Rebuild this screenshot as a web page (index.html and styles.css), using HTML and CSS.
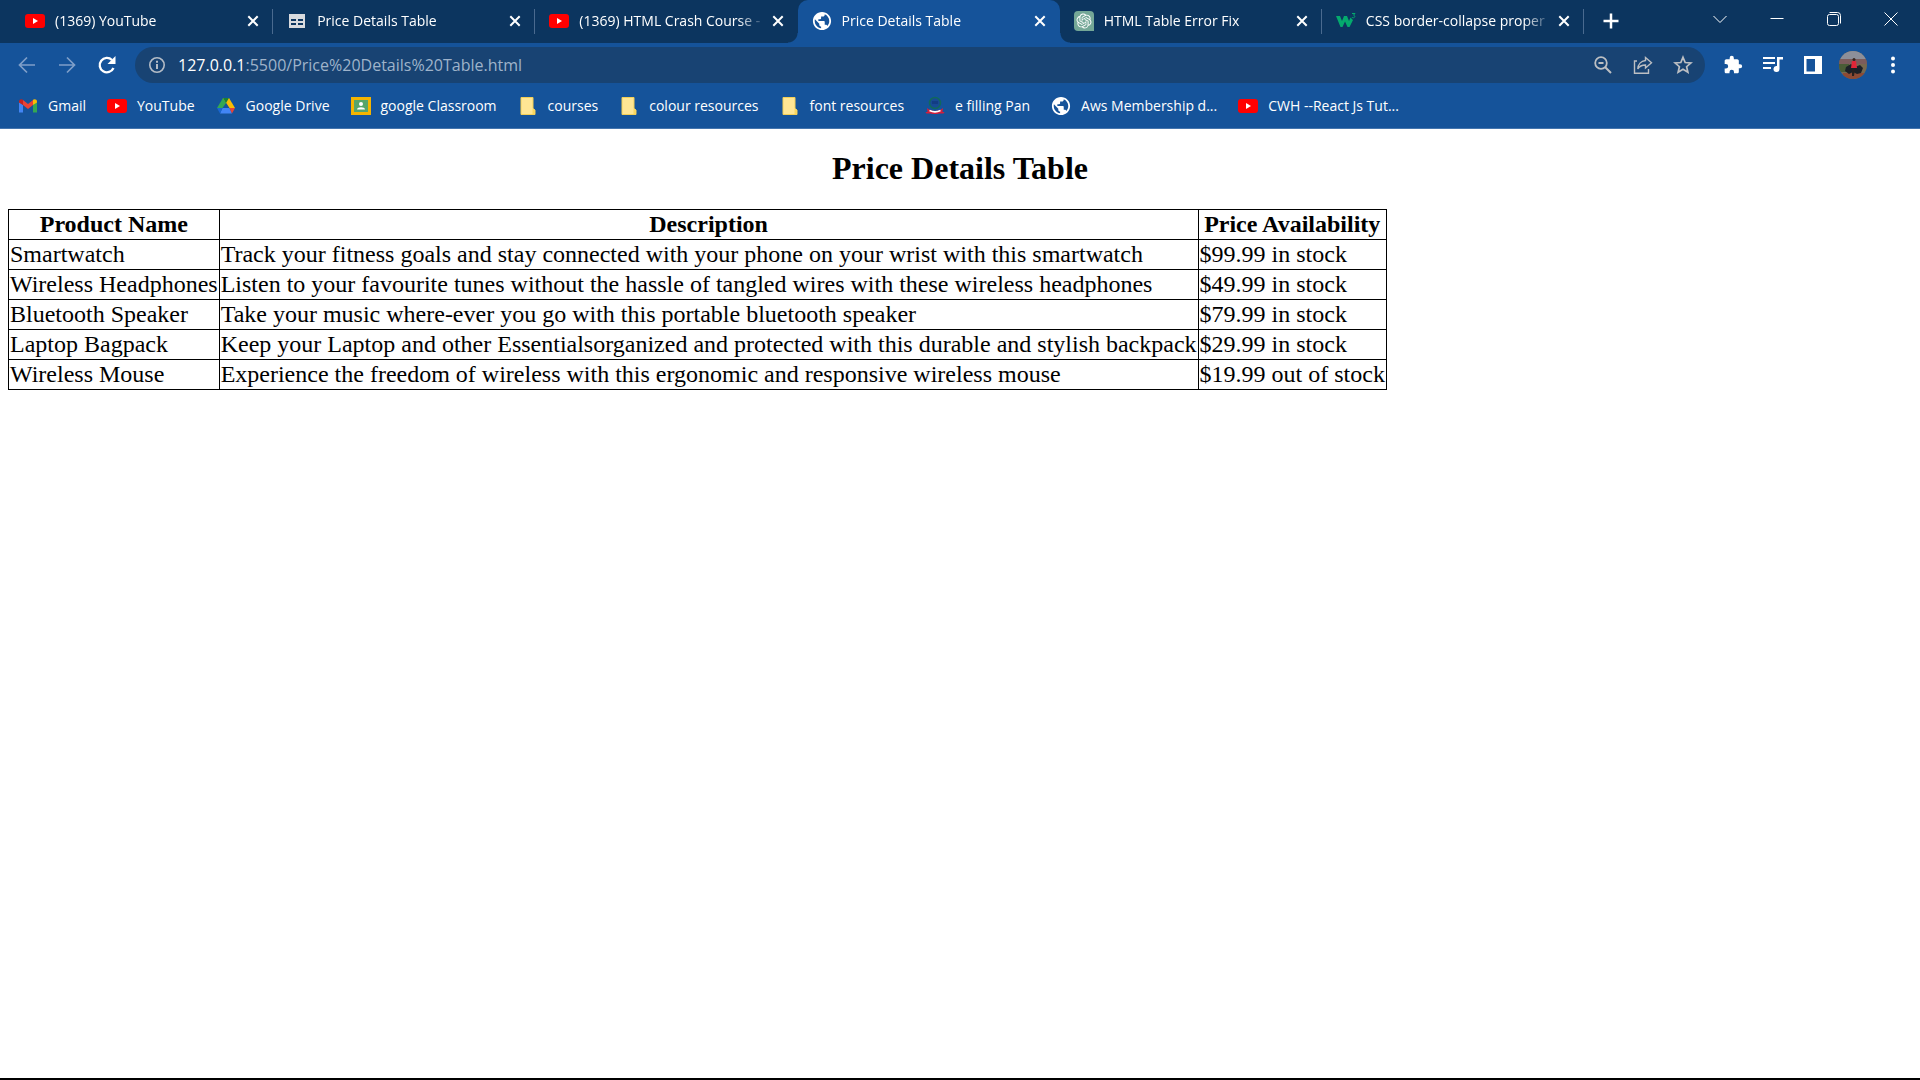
FILE: index.html
```html
<!DOCTYPE html>
<html lang="en">
<head>
<meta charset="utf-8">
<title>Price Details Table</title>
<link rel="stylesheet" href="styles.css">
</head>
<body>
<svg class="sprite" aria-hidden="true">
  <symbol id="i-youtube" viewBox="0 0 20 20"><rect y="3" width="20" height="14" rx="3" fill="#f00"/><path d="M8 7l5 3-5 3z" fill="#fff"/></symbol>
  <symbol id="i-table" viewBox="0 0 20 20"><path d="M2 3h16v14H2z" fill="#d8dade"/><path d="M4 8h5v2H4zM11 8h5v2h-5zM4 12h5v2H4zM11 12h5v2h-5z" fill="#0c355f"/></symbol>
  <symbol id="i-globe" viewBox="1 1 22 22"><path fill="#fff" d="M12 2C6.480 2 2 6.480 2 12s4.480 10 10 10 10-4.480 10-10S17.520 2 12 2zm-1 17.930c-3.950-.49-7-3.850-7-7.930 0-.62.08-1.210.21-1.790L9 15v1c0 1.100.9 2 2 2v1.930zm6.900-2.540c-.26-.81-1-1.390-1.900-1.390h-1v-3c0-.55-.45-1-1-1H8v-2h2c.55 0 1-.45 1-1V7h2c1.100 0 2-.9 2-2v-.41c2.930 1.190 5 4.060 5 7.410 0 2.080-.8 3.970-2.100 5.390z"/></symbol>
  <symbol id="i-gpt" viewBox="0 0 20 20"><path d="M4 0h12a4 4 0 0 1 4 4v16H4a4 4 0 0 1-4-4V4a4 4 0 0 1 4-4z" fill="#74a797"/><path transform="translate(2.500 2.500) scale(.625)" fill="#fff" d="M22.282 9.821a5.985 5.985 0 0 0-.516-4.910 6.046 6.046 0 0 0-6.510-2.900A6.065 6.065 0 0 0 4.981 4.180a5.985 5.985 0 0 0-3.998 2.900 6.046 6.046 0 0 0 .743 7.097 5.980 5.980 0 0 0 .51 4.911 6.051 6.051 0 0 0 6.515 2.900A5.985 5.985 0 0 0 13.260 24a6.056 6.056 0 0 0 5.772-4.206 5.990 5.990 0 0 0 3.997-2.900 6.056 6.056 0 0 0-.747-7.073zM13.260 22.430a4.476 4.476 0 0 1-2.876-1.040l.141-.081 4.779-2.758a.795.795 0 0 0 .392-.681v-6.737l2.020 1.168a.071.071 0 0 1 .038.052v5.583a4.504 4.504 0 0 1-4.494 4.494zM3.600 18.304a4.470 4.470 0 0 1-.535-3.014l.142.085 4.783 2.759a.771.771 0 0 0 .780 0l5.843-3.369v2.332a.080.080 0 0 1-.033.062L9.740 19.950a4.500 4.500 0 0 1-6.140-1.646zM2.340 7.896a4.485 4.485 0 0 1 2.366-1.973V11.600a.766.766 0 0 0 .388.676l5.815 3.355-2.020 1.168a.076.076 0 0 1-.071 0l-4.830-2.786A4.504 4.504 0 0 1 2.340 7.872zm16.597 3.855l-5.833-3.387L15.119 7.200a.076.076 0 0 1 .071 0l4.830 2.791a4.494 4.494 0 0 1-.676 8.105v-5.678a.79.79 0 0 0-.407-.667zm2.010-3.023l-.141-.085-4.774-2.782a.776.776 0 0 0-.785 0L9.409 9.230V6.897a.066.066 0 0 1 .028-.061l4.830-2.787a4.500 4.500 0 0 1 6.680 4.660zm-12.640 4.135l-2.020-1.164a.080.080 0 0 1-.038-.057V6.075a4.500 4.500 0 0 1 7.375-3.453l-.142.080L8.704 5.460a.795.795 0 0 0-.393.681zm1.097-2.365l2.602-1.500 2.607 1.500v2.999l-2.597 1.500-2.607-1.500z"/></symbol>
  <symbol id="i-w3" viewBox="0 0 20 20"><path d="M0 5h4l2 5 2-5h3l2 5 1.500-3.500L17 9l-3.500 7h-2L9 10.500 6.500 16h-2z" fill="#04aa6d"/><path d="M16 2.500h3l-1.500 1.700c2 .3 1.500 2.600-.2 2.600-.8 0-1.300-.4-1.500-.8" fill="none" stroke="#04aa6d"/></symbol>
  <symbol id="i-gmail" viewBox="0 0 20 20"><path d="M1 6v10.500h4V9z" fill="#4285f4"/><path d="M15 9v7.500h4V6z" fill="#34a853"/><path d="M1 5.500C1 3.300 3.500 2.500 5 3.800V9L1 6.500z" fill="#c5221f"/><path d="M5 4l5 4 5-4v5l-5 4-5-4z" fill="#ea4335"/><path d="M15 3.800c1.500-1.300 4-.5 4 1.700v1L15 9z" fill="#fbbc04"/></symbol>
  <symbol id="i-drive" viewBox="0 0 20 20"><path d="M7 2h3v5l-3.500 5H1z" fill="#34a853"/><path d="M7 2h6l6 10h-5.500z" fill="#fbbc04"/><path d="M7 2h6l-3 5z" fill="#188038"/><path d="M6.500 12h7l2.500 5.500H4z" fill="#4285f4"/><path d="M13.500 12H19l-3 5.500z" fill="#ea4335"/><path d="M1 12h5.500L4 17.500z" fill="#1967d2"/></symbol>
  <symbol id="i-classroom" viewBox="0 0 20 20"><path d="M0 1h20v18H0z" fill="#f4b400"/><path d="M3 4h14v12H3z" fill="#57a56a"/><circle cx="10" cy="8" r="2" fill="#fff"/><path d="M6 13.500c0-3 8-3 8 0z" fill="#fff"/></symbol>
  <symbol id="i-folder" viewBox="0 0 20 20"><path d="M3 1.500h12v11l2 1.500v4.500H3z" fill="#ffe694" stroke="#f3cf57"/><path d="M14.500 18v-5l2.500 1v4z" fill="#f9d65f"/></symbol>
  <symbol id="i-pan" viewBox="0 0 20 20"><circle cx="10" cy="7" r="5.500" fill="#174a94" stroke="#11695c" stroke-width="1.500"/><path d="M7 5h6v3H7z" fill="#123d83"/><path d="M2 12c4 4 12 4 16 0l-.5 4h2l-1 1.500h-4c-3 .8-6 .8-9 0h-4L.5 16h2z" fill="#d21f3c"/><path d="M4.500 14.500c4 2 7 2 11 0" fill="none" stroke="#fff" stroke-width="1.500"/></symbol>
  <symbol id="i-close" viewBox="0 0 20 20"><path d="M5.300 5.300l9.400 9.400M14.700 5.300l-9.400 9.400" fill="none" stroke="#fff" stroke-width="2"/></symbol>
</svg>

<header class="browser">
  <div class="tabstrip">
    <nav class="tabs" aria-label="Tabs">
      <div class="tab"><svg class="icon"><use href="#i-youtube"/></svg><a class="tab-title" href="#">(1369) YouTube</a><button class="tab-close" aria-label="Close tab"><svg class="icon"><use href="#i-close"/></svg></button></div>
      <div class="tab"><svg class="icon"><use href="#i-table"/></svg><a class="tab-title" href="#">Price Details Table</a><button class="tab-close" aria-label="Close tab"><svg class="icon"><use href="#i-close"/></svg></button></div>
      <div class="tab before-active"><svg class="icon"><use href="#i-youtube"/></svg><a class="tab-title" href="#">(1369) HTML Crash Course -</a><button class="tab-close" aria-label="Close tab"><svg class="icon"><use href="#i-close"/></svg></button></div>
      <div class="tab active"><svg class="icon"><use href="#i-globe"/></svg><a class="tab-title" href="#">Price Details Table</a><button class="tab-close" aria-label="Close tab"><svg class="icon"><use href="#i-close"/></svg></button></div>
      <div class="tab"><svg class="icon"><use href="#i-gpt"/></svg><a class="tab-title" href="#">HTML Table Error Fix</a><button class="tab-close" aria-label="Close tab"><svg class="icon"><use href="#i-close"/></svg></button></div>
      <div class="tab"><svg class="icon"><use href="#i-w3"/></svg><a class="tab-title" href="#">CSS border-collapse proper</a><button class="tab-close" aria-label="Close tab"><svg class="icon"><use href="#i-close"/></svg></button></div>
    </nav>
    <button class="new-tab" aria-label="New tab"><svg class="icon" viewBox="0 0 20 20"><path d="M10 2.500v15M2.500 10h15" stroke="#fff" stroke-width="2.500"/></svg></button>
    <div class="window-controls">
      <button aria-label="Search tabs"><svg class="icon" viewBox="0 0 20 20"><path d="M3.500 7l6.500 6.500L16.500 7"/></svg></button>
      <button aria-label="Minimize"><svg class="icon" viewBox="0 0 20 20"><path d="M3.500 9.500h13"/></svg></button>
      <button aria-label="Restore"><svg class="icon" viewBox="0 0 20 20"><rect x="3.500" y="5.500" width="11" height="11" rx="2"/><path d="M5.500 3.500h8a3 3 0 0 1 3 3v8"/></svg></button>
      <button aria-label="Close"><svg class="icon" viewBox="0 0 20 20"><path d="M3.500 3.500l13 13M16.500 3.500l-13 13"/></svg></button>
    </div>
  </div>

  <div class="toolbar">
    <button class="tool" aria-label="Back"><svg class="icon" viewBox="0 0 20 20"><path d="M18 10H3M10 2.500L2.500 10l7.500 7.500" fill="none" stroke="#7f9fc9" stroke-width="1.700"/></svg></button>
    <button class="tool" aria-label="Forward"><svg class="icon" viewBox="0 0 20 20"><path d="M2 10h15M10 2.500l7.500 7.500-7.500 7.500" fill="none" stroke="#7f9fc9" stroke-width="1.700"/></svg></button>
    <button class="tool" aria-label="Reload"><svg class="icon" viewBox="0 0 20 20"><path d="M16.500 13A7.200 7.200 0 1 1 15 5" fill="none" stroke="#fff" stroke-width="2.300"/><path d="M18.500 1v8h-8z" fill="#fff"/></svg></button>
    <div class="omnibox">
      <svg class="icon" viewBox="0 0 20 20"><circle cx="10" cy="10" r="7.200" fill="none" stroke="#b4bcc6" stroke-width="1.600"/><path d="M9 9h2v5H9zM9 5.800h2v2H9z" fill="#b4bcc6"/></svg>
      <a class="url" href="#"><span class="host">127.0.0.1</span>:5500/Price%20Details%20Table.html</a>
      <button class="tool" aria-label="Zoom"><svg class="icon" viewBox="0 0 20 20"><circle cx="8" cy="8" r="5.800" fill="none" stroke="#bcbfc3" stroke-width="1.800"/><path d="M12 12l6 6M5.500 8h5" stroke="#bcbfc3" stroke-width="2"/></svg></button>
      <button class="tool" aria-label="Share"><svg class="icon" viewBox="0 0 20 20"><path d="M4 6H1.500v12.300h14V14M12.500 2.500l6 5.300-6 5.200v-3C9 10 6.500 11 4.800 14 5 9.500 8 6 12.500 5.500z" fill="none" stroke="#bcbfc3" stroke-width="1.400"/></svg></button>
      <button class="tool" aria-label="Bookmark this tab"><svg class="icon" viewBox="0 0 20 20"><path d="M10 2.300l2.200 5.200 5.700.5-4.300 3.700 1.300 5.500-4.900-2.900-4.900 2.900 1.300-5.500L2.100 8l5.700-.5z" fill="none" stroke="#bcbfc3" stroke-width="1.700"/></svg></button>
    </div>
    <div class="actions">
      <button class="tool" aria-label="Extensions"><svg class="icon" viewBox="0 0 24 24"><path fill="#fff" d="M20.500 11H19V7c0-1.100-.9-2-2-2h-4V3.500a2.500 2.500 0 0 0-5 0V5H4c-1.100 0-2 .9-2 2v3.800h1.500a2.700 2.700 0 0 1 0 5.400H2V20c0 1.100.9 2 2 2h3.800v-1.500a2.700 2.700 0 0 1 5.400 0V22H17c1.100 0 2-.9 2-2v-4h1.500a2.500 2.500 0 0 0 0-5z"/></svg></button>
      <button class="tool" aria-label="Media"><svg class="icon" viewBox="0 0 20 20"><path d="M0 2h12v2H0zM0 7h12v2H0zM0 12h8v2H0zM14 2h6v2.500h-3.500V14a3 3 0 1 1-2.500-3z" fill="#fff"/></svg></button>
      <button class="tool" aria-label="Side panel"><svg class="icon" viewBox="0 0 20 20"><path fill="#fff" fill-rule="evenodd" d="M1 1h18v18H1zM3.500 4v12.500H12V4z"/></svg></button>
      <button class="tool" aria-label="Profile"><svg class="avatar" viewBox="0 0 28 28"><clipPath id="round"><circle cx="14" cy="14" r="14"/></clipPath><g clip-path="url(#round)"><path d="M0 0h28v28H0z" fill="#77694f"/><path d="M0 0h28v8H0z" fill="#8d8f99"/><path d="M0 8h28v5H0z" fill="#7c5c5c"/><path d="M0 13h10v8H0z" fill="#4a5c36"/><path d="M4 22h22v6H4z" fill="#8c4a34"/><path d="M7 16l5-3 4 3 5-2 3 3-2 5-4 1-4-2-4 2-4-3z" fill="#1c2026"/><path d="M13 10h4l1 7h-6z" fill="#e02638"/><circle cx="15" cy="8.500" r="1.500" fill="#38251f"/><path d="M13 18h3l-1 7h-2z" fill="#26201f"/></g></svg></button>
      <button class="tool" aria-label="Menu"><svg class="icon" viewBox="0 0 20 20"><g fill="#fff"><circle cx="10" cy="3.500" r="2"/><circle cx="10" cy="10" r="2"/><circle cx="10" cy="16.500" r="2"/></g></svg></button>
    </div>
  </div>

  <nav class="bookmarks" aria-label="Bookmarks">
    <a href="#"><svg class="icon"><use href="#i-gmail"/></svg>Gmail</a>
    <a href="#"><svg class="icon"><use href="#i-youtube"/></svg>YouTube</a>
    <a href="#"><svg class="icon"><use href="#i-drive"/></svg>Google Drive</a>
    <a href="#"><svg class="icon"><use href="#i-classroom"/></svg>google Classroom</a>
    <a href="#"><svg class="icon"><use href="#i-folder"/></svg>courses</a>
    <a href="#"><svg class="icon"><use href="#i-folder"/></svg>colour resources</a>
    <a href="#"><svg class="icon"><use href="#i-folder"/></svg>font resources</a>
    <a href="#"><svg class="icon"><use href="#i-pan"/></svg>e filling Pan</a>
    <a href="#"><svg class="icon"><use href="#i-globe"/></svg>Aws Membership d...</a>
    <a href="#"><svg class="icon"><use href="#i-youtube"/></svg>CWH --React Js Tut...</a>
  </nav>
</header>

<main class="page">
  <h1>Price Details Table</h1>
  <table>
    <thead>
      <tr><th>Product Name</th><th>Description</th><th>Price Availability</th></tr>
    </thead>
    <tbody>
      <tr><td>Smartwatch</td><td>Track your fitness goals and stay connected with your phone on your wrist with this smartwatch</td><td>$99.99 in stock</td></tr>
      <tr><td>Wireless Headphones</td><td>Listen to your favourite tunes without the hassle of tangled wires with these wireless headphones</td><td>$49.99 in stock</td></tr>
      <tr><td>Bluetooth Speaker</td><td>Take your music where-ever you go with this portable bluetooth speaker</td><td>$79.99 in stock</td></tr>
      <tr><td>Laptop Bagpack</td><td>Keep your Laptop and other Essentialsorganized and protected with this durable and stylish backpack</td><td>$29.99 in stock</td></tr>
      <tr><td>Wireless Mouse</td><td>Experience the freedom of wireless with this ergonomic and responsive wireless mouse</td><td>$19.99 out of stock</td></tr>
    </tbody>
  </table>
</main>
</body>
</html>
```
FILE: styles.css
```css
* { box-sizing: border-box; }

body {
  margin: 0;
  min-height: 100vh;
  display: flex;
  flex-direction: column;
  background: #fff;
  border-bottom: 2px solid #000;
  color: #000;
  font-family: "Liberation Serif", "Times New Roman", serif;
}

.sprite { display: none; }

button {
  display: flex;
  align-items: center;
  justify-content: center;
  padding: 0;
  border: 0;
  background: none;
}

a { color: inherit; text-decoration: none; }

.icon { width: 20px; height: 20px; flex: none; display: block; }

.browser {
  background: #15539a;
  border-bottom: 1px solid #4475ae;
  color: #fff;
  font: 14px/20px "Open Sans", "Noto Sans", sans-serif;
}

/* Tab strip */
.tabstrip {
  display: flex;
  height: 43px;
  padding: 0 1px 0 11px;
  background: #0c355f;
}

.tabs { display: flex; flex: 0 1 1573px; min-width: 0; }

.tab {
  display: flex;
  align-items: center;
  flex: 1 1 0;
  min-width: 0;
  position: relative;
  padding: 0 10px 2px 14px;
}

.tab::after {
  content: "";
  position: absolute;
  right: 0;
  top: 9px;
  width: 1px;
  height: 25px;
  background: #4a6a8f;
}

.tab-title {
  flex: 1;
  min-width: 0;
  margin-left: 10px;
  overflow: hidden;
  white-space: nowrap;
  mask-image: linear-gradient(to right, #000 calc(100% - 30px), transparent calc(100% - 2px));
}

.before-active::after { display: none; }

.active {
  background: #15539a;
  border-radius: 10px 10px 0 0;
}

/* Concave feet on both sides of the selected tab */
.active::before,
.active::after {
  content: "";
  position: absolute;
  top: auto;
  bottom: 0;
  width: 10px;
  height: 10px;
}

.active::before { left: -10px; background: radial-gradient(circle at 0 0, transparent 9px, #15539a 10px); }
.active::after { right: -10px; background: radial-gradient(circle at 100% 0, transparent 9px, #15539a 10px); }

.new-tab { width: 54px; padding-bottom: 1px; }

.window-controls { display: flex; margin-left: auto; }
.window-controls button { width: 57px; height: 37px; }
.window-controls path,
.window-controls rect { fill: none; stroke: #fff; stroke-width: 1; }

/* Toolbar */
.toolbar {
  display: flex;
  align-items: center;
  height: 44px;
  padding: 0 7px;
}

.tool { width: 40px; height: 36px; flex: none; }

.omnibox {
  display: flex;
  align-items: center;
  flex: 1;
  min-width: 0;
  height: 36px;
  margin: 0 8px;
  padding: 0 2px 0 12px;
  border-radius: 18px;
  background: #184373;
}

.url {
  flex: 1;
  min-width: 0;
  margin-left: 11px;
  overflow: hidden;
  white-space: nowrap;
  color: #9fb3ca;
  font-size: 16px;
  line-height: 24px;
}

.host { color: #fff; }

.actions { display: flex; }
.avatar { width: 28px; height: 28px; }

/* Bookmarks bar */
.bookmarks {
  display: flex;
  gap: 21px;
  height: 41px;
  padding: 0 18px 4px;
  overflow: hidden;
}

.bookmarks a { display: flex; align-items: center; gap: 10px; white-space: nowrap; }

/* Page */
.page { padding: 20px 8px 8px; }

h1 {
  margin: 0 0 22px;
  font-size: 32px;
  line-height: 38px;
  text-align: center;
}

table {
  border-collapse: collapse;
  font-size: 24px;
  line-height: 27px;
}

th, td { padding: 1px; border: 1px solid #000; white-space: nowrap; }
```
